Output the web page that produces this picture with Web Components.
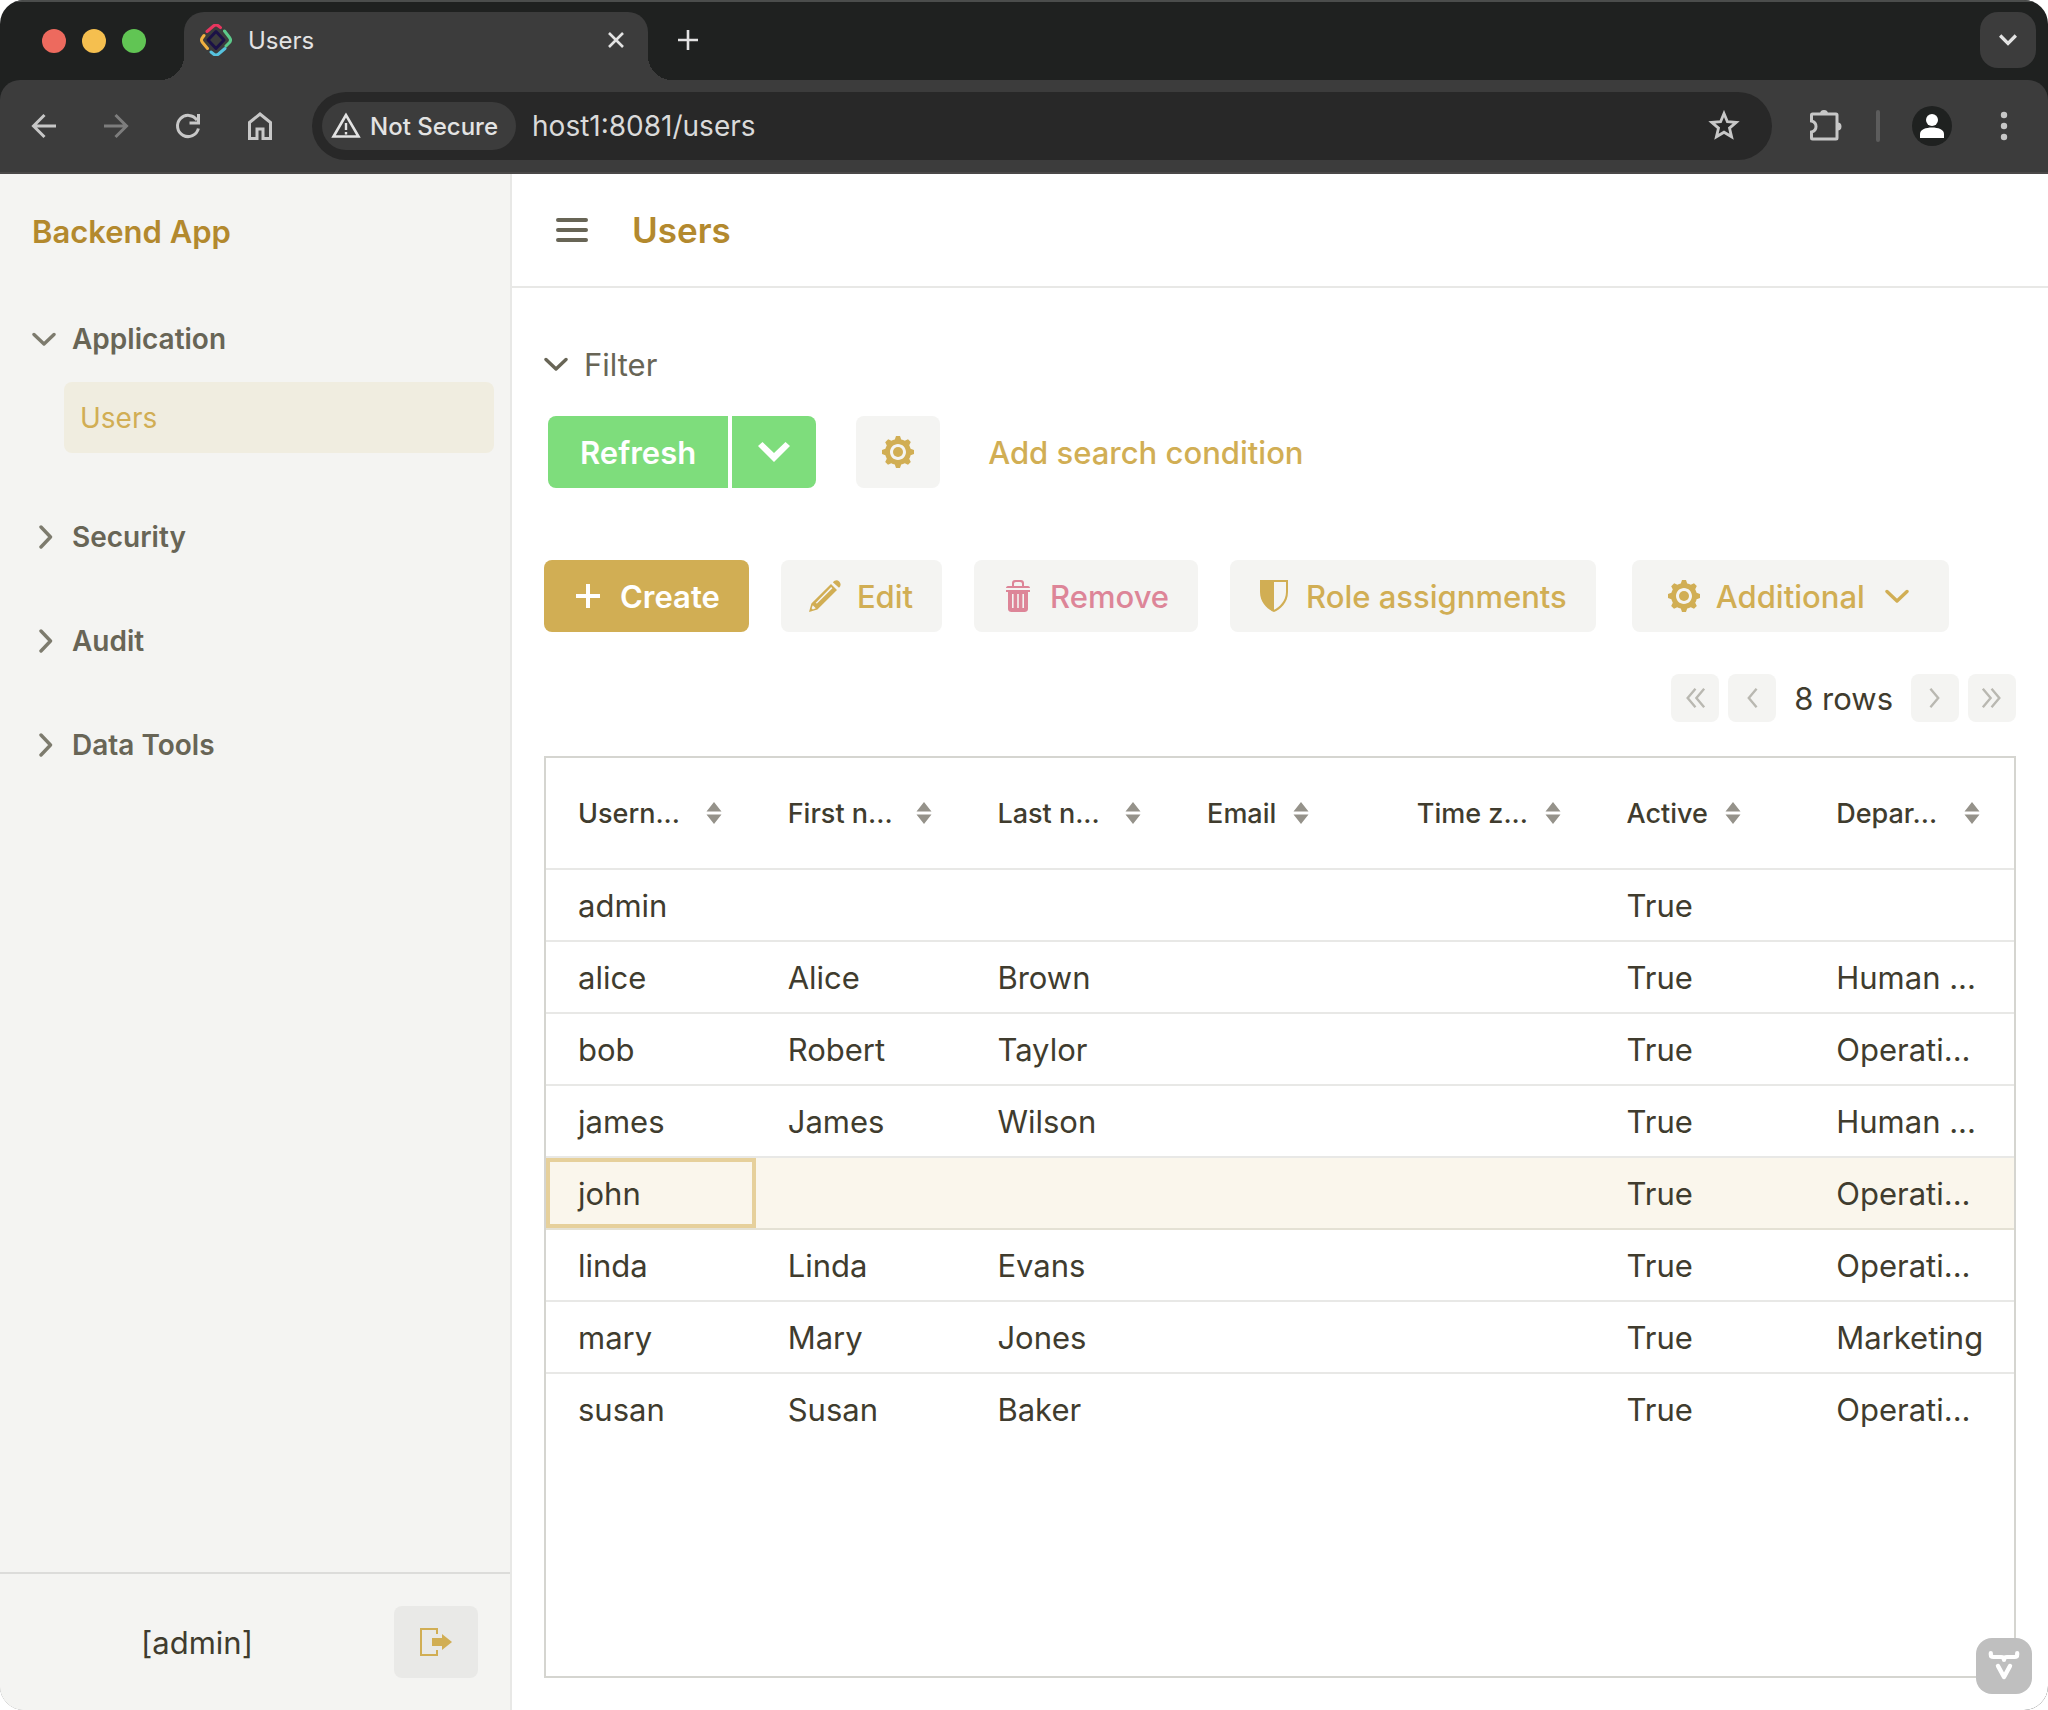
<!DOCTYPE html>
<html lang="en">
<head>
<meta charset="utf-8">
<title>Users</title>
<style>
  body { margin: 0; background: #fff; font-family: Inter, "Liberation Sans", sans-serif; }
</style>
</head>
<body>
<browser-window>
  <tab-strip slot="chrome" label="Users"></tab-strip>
  <nav-toolbar slot="chrome" address="host1:8081/users"></nav-toolbar>
  <app-layout>
    <app-sidebar slot="drawer" heading="Backend App" user="[admin]">
      <nav-group label="Application" open><nav-item href="#users">Users</nav-item></nav-group>
      <nav-group label="Security"></nav-group>
      <nav-group label="Audit"></nav-group>
      <nav-group label="Data Tools"></nav-group>
    </app-sidebar>
    <view-header>Users</view-header>
    <users-view></users-view>
  </app-layout>
</browser-window>

<script>
const ICONS = {
  cog: ['0 0 16 16', '<path fill="currentColor" d="M16 9v-2l-1.7-0.6c-0.2-0.6-0.4-1.2-0.7-1.8l0.8-1.6-1.4-1.4-1.6 0.8c-0.5-0.3-1.1-0.6-1.8-0.7l-0.6-1.7h-2l-0.6 1.7c-0.6 0.2-1.2 0.4-1.7 0.7l-1.6-0.8-1.5 1.5 0.8 1.6c-0.3 0.5-0.5 1.1-0.7 1.7l-1.7 0.6v2l1.7 0.6c0.2 0.6 0.4 1.2 0.7 1.8l-0.8 1.6 1.4 1.4 1.6-0.8c0.5 0.3 1.1 0.6 1.8 0.7l0.6 1.7h2l0.6-1.7c0.6-0.2 1.2-0.4 1.8-0.7l1.6 0.8 1.4-1.4-0.8-1.6c0.3-0.5 0.6-1.1 0.7-1.8l1.7-0.6zM8 12c-2.2 0-4-1.8-4-4s1.8-4 4-4 4 1.8 4 4-1.8 4-4 4z"/><circle cx="8" cy="8" r="2.5" fill="currentColor"/>'],
  pencil: ['0 0 16 16', '<path fill="currentColor" fill-rule="evenodd" d="M11.9 1.100c1-1.100 2.200-1.400 3.200-.4s.9 2.200-.1 3.200zM11 2l3 3-9.800 9.800L0 16l1.200-4.200zM1.900 12.600l-.6 1.500.6.600 1.500-.6zM3.300 11.500l.7.300L11.700 4.100l-.6-.6z"/>'],
  trash: ['0 0 16 16', '<path fill="currentColor" fill-rule="evenodd" d="M5 3V1.500C5 .6 5.600 0 6.500 0h3c.9 0 1.500.6 1.500 1.500V3h1.500c.9 0 1.500.3 1.500 1H2c0-.7.6-1 1.500-1zM6 2v1h4V2c0-.6-.3-1-1-1H7c-.7 0-1 .4-1 1zM2 5h12v1h-1v8.500c0 .9-.8 1.500-1.700 1.500H4.700C3.800 16 3 15.400 3 14.500V6H2zM5 7v7h.8V7zM7.600 7v7h.8V7zM10.200 7v7h.8V7z"/>'],
  shield: ['0 0 16 16', '<path fill="currentColor" fill-rule="evenodd" d="M1 0h14v6c0 5.500-4 8.800-7 10-3-1.200-7-4.500-7-10zM8 1v13.900c2.600-1.300 6-4.300 6-8.900V1z"/>'],
  signout: ['0 0 16 16', '<path fill="currentColor" d="M9 4V1H0v14h9v-3H8v2H1V2h7v2z"/><path fill="currentColor" d="M16 8l-5-4v2H6v4h5v2z"/>'],
  plus: ['0 0 32 32', '<path fill="currentColor" d="M14 4h4v10h10v4H18v10h-4V18H4v-4h10z"/>'],
  down: ['0 0 24 24', '<path d="M2 7.500l10 9.500 10-9.500" fill="none" stroke="currentColor" stroke-width="3.400" stroke-linecap="round" stroke-linejoin="round"/>'],
  right: ['0 0 24 24', '<path d="M9 2l9.500 10L9 22" fill="none" stroke="currentColor" stroke-width="3.400" stroke-linecap="round" stroke-linejoin="round"/>'],
  downbold: ['0 0 32 32', '<path fill="currentColor" d="M0 10l4.500-4L16 17 27.500 6l4.500 4-16 16z"/>'],
  first: ['0 0 24 24', '<path d="M12.500 2L4 12l8.500 10M22 2l-8.500 10L22 22" fill="none" stroke="currentColor" stroke-width="2.600"/>'],
  prev: ['0 0 24 24', '<path d="M17 2L8.500 12 17 22" fill="none" stroke="currentColor" stroke-width="2.600"/>'],
  next: ['0 0 24 24', '<path d="M7 2l8.500 10L7 22" fill="none" stroke="currentColor" stroke-width="2.600"/>'],
  last: ['0 0 24 24', '<path d="M2 2l8.500 10L2 22M11.500 2L20 12l-8.500 10" fill="none" stroke="currentColor" stroke-width="2.600"/>'],
  sorter: ['0 0 16 24', '<path fill="currentColor" d="M8 1l7.500 9.500H.5zM8 23L.5 13.500h15z"/>'],
  menu: ['0 0 32 32', '<path d="M2 6h28M2 16h28M2 26h28" stroke="currentColor" stroke-width="4" stroke-linecap="round"/>'],
  back: ['0 0 32 32', '<path d="M28 16H6M16.500 5L5.500 16l11 11" fill="none" stroke="currentColor" stroke-width="3"/>'],
  forward: ['0 0 32 32', '<path d="M4 16h22M15.500 5l11 11-11 11" fill="none" stroke="currentColor" stroke-width="3"/>'],
  reload: ['0 0 32 32', '<path d="M26.400 18.500A10.600 10.600 0 1 1 25 10.200" fill="none" stroke="currentColor" stroke-width="3"/><path d="M26.500 4v9h-9" fill="none" stroke="currentColor" stroke-width="3"/>'],
  home: ['0 0 32 32', '<path d="M5.500 12.500L16 4l10.500 8.500v16H19V19h-6v9.500H5.500z" fill="none" stroke="currentColor" stroke-width="3"/>'],
  warning: ['0 0 32 32', '<path d="M16 5L3.500 26.500h25z" fill="none" stroke="currentColor" stroke-width="2.600"/><path d="M16 13v7M16 22v2.600" stroke="currentColor" stroke-width="2.400"/>'],
  star: ['0 0 32 32', '<path d="M16 3.500l3.400 8.200 8.800.7-6.700 5.700 2.100 8.700L16 22.200l-7.600 4.600 2.100-8.700-6.700-5.700 8.800-.7z" fill="none" stroke="currentColor" stroke-width="2.800"/>'],
  puzzle: ['0 0 32 32', '<path d="M4.500 4.500h23.500a1 1 0 0 1 1 1v23a1 1 0 0 1-1 1h-23.500a1 1 0 0 1-1-1v-6c6-1.500 6-9.500 0-11v-6a1 1 0 0 1 1-1z" transform="translate(-2 -.5)" fill="none" stroke="currentColor" stroke-width="3"/><path d="M10 4a4 4 0 0 1 8 0zM27.500 12.500a4 4 0 0 1 0 8z" fill="currentColor"/>'],
  person: ['0 0 40 40', '<circle cx="20" cy="20" r="20" fill="#1f2120"/><circle cx="20" cy="14" r="6" fill="#fff"/><path d="M8 32v-4c0-4.500 6-6.500 12-6.500s12 2 12 6.500v4z" fill="#fff"/>'],
  dots: ['0 0 32 32', '<g fill="currentColor"><circle cx="16" cy="5" r="3.200"/><circle cx="16" cy="16" r="3.200"/><circle cx="16" cy="27" r="3.200"/></g>'],
  close: ['0 0 16 16', '<path d="M1 1l14 14M15 1L1 15" stroke="currentColor" stroke-width="2.600"/>'],
  newtab: ['0 0 20 20', '<path d="M10 0v20M0 10h20" stroke="currentColor" stroke-width="2.600"/>'],
  chevtab: ['0 0 16 16', '<path d="M1 4l7 7 7-7" fill="none" stroke="currentColor" stroke-width="3"/>'],
  favicon: ['0 0 32 32', '<g fill="none" stroke-width="3" stroke-linecap="round" stroke-linejoin="round"><path d="M7 7.500l6.500-5.500q2.500-2 5 0l2 1.600" stroke="#e8365f"/><path d="M24.500 7l5 6.500q2 2.500 0 5l-3.500 3.500" stroke="#5cc98a"/><path d="M25 24.500l-6.500 5.500q-2.500 2-5 0L11 28" stroke="#56c2de"/><path d="M7.500 24.500L2.500 18.500q-2-2.500 0-5L4 11.500" stroke="#f0b040"/><path d="M16 7.500l8 8.500-8 8.500L8 16z" stroke="#1b1147" stroke-width="3"/></g>'],
  vaadin: ['0 0 56 56', '<path d="M14.800 15v1.500q0 2.500 2.700 2.500H25q3 0 3 3 0-3 3-3h7.500q2.700 0 2.700-2.500V15" fill="none" stroke="#fff" stroke-width="4.200" stroke-linecap="round" stroke-linejoin="round"/><path d="M22 28l6 11 6-11" fill="none" stroke="#fff" stroke-width="4.400" stroke-linecap="round" stroke-linejoin="round"/>']
};

class BaseElement extends HTMLElement {
  connectedCallback() {
    if (this.shadowRoot) return;
    this.attachShadow({ mode: 'open' }).innerHTML =
      `<style>*{box-sizing:border-box} button,input{font:inherit;color:inherit;border:0;background:none;padding:0;margin:0} ${this.css()}</style>${this.html()}`;
  }
  css() { return ':host{display:block}'; }
  html() { return '<slot></slot>'; }
}
const define = (name, css, html) => customElements.define(name, class extends BaseElement {
  css() { return css; }
  html() { return html(this); }
});

define('ui-icon', `
  :host { display: inline-flex; flex: none; width: var(--icon-size, 32px); height: var(--icon-size, 32px); }
  svg { width: 100%; height: 100%; }`,
  el => { const [box, body] = ICONS[el.getAttribute('name')]; return `<svg viewBox="${box}" aria-hidden="true">${body}</svg>`; });

define('ui-button', `
  :host { display: inline-flex; flex: none; }
  button { display: flex; align-items: center; justify-content: center; gap: 16px; height: 72px; padding: 0 29px 0 28px;
    border-radius: 8px; background: #f4f4f2; color: #d1ae54; font-size: 31px; font-weight: 500; white-space: nowrap; cursor: pointer; }
  :host([variant=primary]) button { background: #d1ae54; color: #fff; font-weight: 600; }
  :host([variant=danger]) button { color: #dd8598; }
  :host([variant=link]) button { background: none; padding: 0 16px; }
  :host([variant=menu]) button { padding: 0 40px 0 36px; }
  :host([variant=start]) button { background: #7edd7c; color: #fff; font-weight: 600; padding: 0 32px; border-radius: 8px 0 0 8px; }
  :host([variant=end]) button { background: #7edd7c; color: #fff; width: 84px; padding: 0; border-radius: 0 8px 8px 0; }
  :host([variant=square]) button { width: 84px; padding: 0; }
  :host([variant=quiet]) button { width: 84px; padding: 0; background: #e9e9e7; }
  .trail { --icon-size: 24px; margin-left: 4px; }`,
  el => {
    const icon = el.getAttribute('icon'), trail = el.getAttribute('trailing');
    const label = el.getAttribute('label');
    return `<button type="button"${label ? ` aria-label="${label}"` : ''}>${icon ? `<ui-icon name="${icon}"></ui-icon>` : ''}${label ? '' : '<slot></slot>'}${trail ? `<ui-icon class="trail" name="${trail}"></ui-icon>` : ''}</button>`;
  });

define('browser-window', `
  :host { display: flex; flex-direction: column; min-height: 100vh; border-radius: 24px; overflow: hidden; background: #1f2120; }
  ::slotted(app-layout) { flex: 1; }`,
  () => '<slot name="chrome"></slot><slot></slot>');

define('tab-strip', `
  :host { display: flex; align-items: flex-end; height: 80px; padding: 0 12px 0 42px; color: #e3e3e3; border-top: 2px solid #4b4d4c; box-sizing: border-box; }
  .lights { display: flex; gap: 16px; height: 78px; align-items: center; }
  .lights i { width: 24px; height: 24px; border-radius: 50%; background: #ed6a5e; }
  .lights i:nth-child(2) { background: #f5bf4f; } .lights i:nth-child(3) { background: #61c554; }
  .tab { position: relative; display: flex; align-items: center; width: 464px; height: 68px; margin-left: 38px; padding: 0 24px 12px 16px; gap: 16px;
    border-radius: 20px 20px 0 0; background: #3c3c3c; font-size: 24px; }
  .tab::before, .tab::after { content: ""; position: absolute; bottom: 0; width: 24px; height: 24px; }
  .tab::before { left: -24px; background: radial-gradient(circle at 0 0, transparent 24px, #3c3c3c 24px); }
  .tab::after { right: -24px; background: radial-gradient(circle at 100% 0, transparent 24px, #3c3c3c 24px); }
  .tab span { flex: 1; }
  button { display: flex; align-items: center; justify-content: center; cursor: pointer; }
  .close { --icon-size: 16px; }
  .new { --icon-size: 20px; margin-left: 30px; height: 80px; }
  .list { --icon-size: 18px; margin: 0 0 12px auto; width: 56px; height: 56px; border-radius: 18px; background: #3c3c3c; }`,
  el => `<div class="lights"><i></i><i></i><i></i></div>
    <div class="tab"><ui-icon name="favicon"></ui-icon><span>${el.getAttribute('label')}</span>
      <button class="close" aria-label="Close tab"><ui-icon name="close"></ui-icon></button></div>
    <button class="new" aria-label="New tab"><ui-icon name="newtab"></ui-icon></button>
    <button class="list" aria-label="Search tabs"><ui-icon name="chevtab"></ui-icon></button>`);

define('nav-toolbar', `
  :host { display: flex; align-items: center; height: 94px; padding: 0 28px; gap: 40px; box-sizing: border-box; color: #c7c7c7;
    background: #3c3c3c; border-radius: 20px 20px 0 0; border-bottom: 2px solid #4a4848; }
  button { display: flex; cursor: pointer; }
  button:disabled { color: #7d7d7d; }
  .box { flex: 1; display: flex; align-items: center; height: 68px; border-radius: 34px; background: #282828; padding: 0 32px 0 10px; margin-left: -4px; }
  .chip { display: flex; align-items: center; gap: 8px; height: 48px; padding: 0 18px 0 8px; border-radius: 24px; background: #3c3c3c; color: #e3e3e3; font-size: 24px; font-weight: 500; white-space: nowrap; }
  input { flex: 1; min-width: 0; margin: 0 16px; font-size: 28px; color: #dadada; outline: 0; }
  .end { display: flex; align-items: center; gap: 34px; margin-left: -2px; }
  .end hr { width: 4px; height: 32px; margin: 0; border: 0; border-radius: 2px; background: #5c5c5c; }
  .who { --icon-size: 40px; margin-left: -2px; } .more { margin-left: 2px; }`,
  el => `<button aria-label="Back"><ui-icon name="back"></ui-icon></button>
    <button aria-label="Forward" disabled><ui-icon name="forward"></ui-icon></button>
    <button aria-label="Reload"><ui-icon name="reload"></ui-icon></button>
    <button aria-label="Home"><ui-icon name="home"></ui-icon></button>
    <div class="box"><button class="chip"><ui-icon name="warning"></ui-icon>Not Secure</button>
      <input type="text" aria-label="Address" value="${el.getAttribute('address')}">
      <button aria-label="Bookmark"><ui-icon name="star"></ui-icon></button></div>
    <div class="end"><button aria-label="Extensions"><ui-icon name="puzzle"></ui-icon></button><hr>
      <button class="who" aria-label="Profile"><ui-icon name="person"></ui-icon></button>
      <button class="more" aria-label="Menu"><ui-icon name="dots"></ui-icon></button></div>`);

define('app-layout', `
  :host { display: flex; background: #fff; position: relative; }
  main { flex: 1; min-width: 0; display: flex; flex-direction: column; }
  ::slotted(users-view) { flex: 1; }
  .dev { position: absolute; right: 16px; bottom: 16px; width: 56px; height: 56px; border-radius: 16px; background: #bfbfbf; --icon-size: 56px; display: flex; cursor: pointer; }`,
  () => `<slot name="drawer"></slot><main><slot></slot></main>
    <button class="dev" aria-label="Development tools"><ui-icon name="vaadin"></ui-icon></button>`);

define('app-sidebar', `
  :host { display: flex; flex-direction: column; width: 512px; flex: none; box-sizing: border-box; background: #f4f4f2; border-right: 2px solid #e8e8e6; }
  h2 { display: flex; align-items: center; height: 114px; margin: 0; padding: 0 32px; font-size: 31px; font-weight: 600; color: #b3892e; }
  nav { flex: 1; display: flex; flex-direction: column; gap: 32px; padding: 15px 16px 0 32px; }
  footer { display: flex; align-items: center; height: 138px; padding: 0 32px; border-top: 2px solid #dcdcda; }
  footer span { flex: 1; padding-right: 32px; text-align: center; font-size: 31px; color: #403c2e; }`,
  el => `<h2>${el.getAttribute('heading')}</h2><nav><slot></slot></nav>
    <footer><span>${el.getAttribute('user')}</span><ui-button variant="quiet" icon="signout" label="Log out"></ui-button></footer>`);

define('nav-group', `
  :host { display: block; color: #686556; }
  summary { display: flex; align-items: center; gap: 16px; height: 72px; font-size: 28px; font-weight: 600; list-style: none; cursor: pointer; --icon-size: 24px; }
  ui-icon { color: #7d7b6e; }
  .items { padding: 7px 0 16px 32px; }`,
  el => {
    const open = el.hasAttribute('open');
    return `<details${open ? ' open' : ''}><summary><ui-icon name="${open ? 'down' : 'right'}"></ui-icon>${el.getAttribute('label')}</summary><div class="items"><slot></slot></div></details>`;
  });

define('nav-item', `
  a { display: flex; align-items: center; height: 71px; padding: 0 16px; border-radius: 8px; background: #f0ede0; color: #d1ae54; font-size: 28px; text-decoration: none; }`,
  el => `<a href="${el.getAttribute('href')}" aria-current="page"><slot></slot></a>`);

define('view-header', `
  :host { display: flex; align-items: center; gap: 44px; height: 114px; padding: 0 44px; box-sizing: border-box; border-bottom: 2px solid #e8e8e6; color: #686556; }
  button { display: flex; cursor: pointer; }
  h1 { margin: 0; font-size: 35px; font-weight: 600; color: #b3892e; }`,
  () => '<button aria-label="Menu toggle"><ui-icon name="menu"></ui-icon></button><h1><slot></slot></h1>');

define('row-pager', `
  :host { display: flex; justify-content: flex-end; align-items: center; gap: 9px; color: #403c2e; font-size: 31px; }
  button { display: flex; align-items: center; justify-content: center; width: 48px; height: 48px; border-radius: 8px; background: #f4f4f2; color: #b9b8b1; --icon-size: 22px; }
  span { margin: 0 9px; white-space: nowrap; }`,
  () => `<button disabled aria-label="First page"><ui-icon name="first"></ui-icon></button>
    <button disabled aria-label="Previous page"><ui-icon name="prev"></ui-icon></button>
    <span><slot></slot></span>
    <button disabled aria-label="Next page"><ui-icon name="next"></ui-icon></button>
    <button disabled aria-label="Last page"><ui-icon name="last"></ui-icon></button>`);

const COLUMNS = ['Usern...', 'First n...', 'Last n...', 'Email', 'Time z...', 'Active', 'Depar...'];
const ROWS = [
  ['admin', '', '', '', '', 'True', ''],
  ['alice', 'Alice', 'Brown', '', '', 'True', 'Human ...'],
  ['bob', 'Robert', 'Taylor', '', '', 'True', 'Operati...'],
  ['james', 'James', 'Wilson', '', '', 'True', 'Human ...'],
  ['john', '', '', '', '', 'True', 'Operati...'],
  ['linda', 'Linda', 'Evans', '', '', 'True', 'Operati...'],
  ['mary', 'Mary', 'Jones', '', '', 'True', 'Marketing'],
  ['susan', 'Susan', 'Baker', '', '', 'True', 'Operati...']
];
define('data-grid', `
  :host { display: block; border: 2px solid #d5d5d0; color: #403c2e; }
  table { width: 100%; table-layout: fixed; border-collapse: separate; border-spacing: 0; }
  th, td { height: 72px; padding: 0 0 0 32px; text-align: left; font-size: 31px; font-weight: 400; white-space: nowrap; border-bottom: 2px solid #e8e8e6; }
  th { height: 112px; font-size: 27px; font-weight: 500; }
  th button { display: flex; align-items: center; gap: 17px; text-align: left; cursor: pointer; }
  th span.cut { width: 111px; }
  ui-icon { width: 16px; height: 24px; color: #95928a; }
  tr:last-child td { border-bottom-color: transparent; }
  tr.selected td { background: #faf6ec; border-bottom-color: #e4e1d4; }
  tr.selected td:first-child { box-shadow: inset 0 0 0 4px #e6d09b; }`,
  () => `<table><thead><tr>${COLUMNS.map(c => `<th scope="col"><button><span${c.endsWith('.') ? ' class="cut"' : ''}>${c}</span><ui-icon name="sorter"></ui-icon></button></th>`).join('')}</tr></thead>
    <tbody>${ROWS.map(r => `<tr${r[0] === 'john' ? ' class="selected"' : ''}>${r.map(c => `<td>${c}</td>`).join('')}</tr>`).join('')}</tbody></table>`);
// The header row is the only row of its section, so its rule keeps the th border.

define('filter-panel', `
  summary { display: flex; align-items: center; gap: 16px; height: 40px; font-size: 31px; color: #686556; list-style: none; cursor: pointer; --icon-size: 24px; }
  .row { display: flex; align-items: center; gap: 40px; padding: 32px 4px 0; }
  .split { display: flex; gap: 4px; }
  .row > :last-child { margin-left: -8px; }`,
  () => `<details open><summary><ui-icon name="down"></ui-icon>Filter</summary><div class="row">
    <div class="split"><ui-button variant="start">Refresh</ui-button><ui-button variant="end" icon="downbold" label="More"></ui-button></div>
    <ui-button variant="square" icon="cog" label="Filter settings"></ui-button>
    <ui-button variant="link">Add search condition</ui-button></div></details>`);

define('users-view', `
  :host { display: flex; flex-direction: column; padding: 56px 32px 32px; }
  .actions { display: flex; gap: 32px; margin: 72px 0 42px; }
  .actions > :last-child { margin-left: 4px; }
  data-grid { flex: 1; margin-top: 34px; }`,
  () => `<filter-panel></filter-panel>
    <div class="actions"><ui-button variant="primary" icon="plus">Create</ui-button><ui-button icon="pencil">Edit</ui-button>
      <ui-button variant="danger" icon="trash">Remove</ui-button><ui-button icon="shield">Role assignments</ui-button>
      <ui-button variant="menu" icon="cog" trailing="down">Additional</ui-button></div>
    <row-pager>8 rows</row-pager><data-grid></data-grid>`);
</script>
</body>
</html>
